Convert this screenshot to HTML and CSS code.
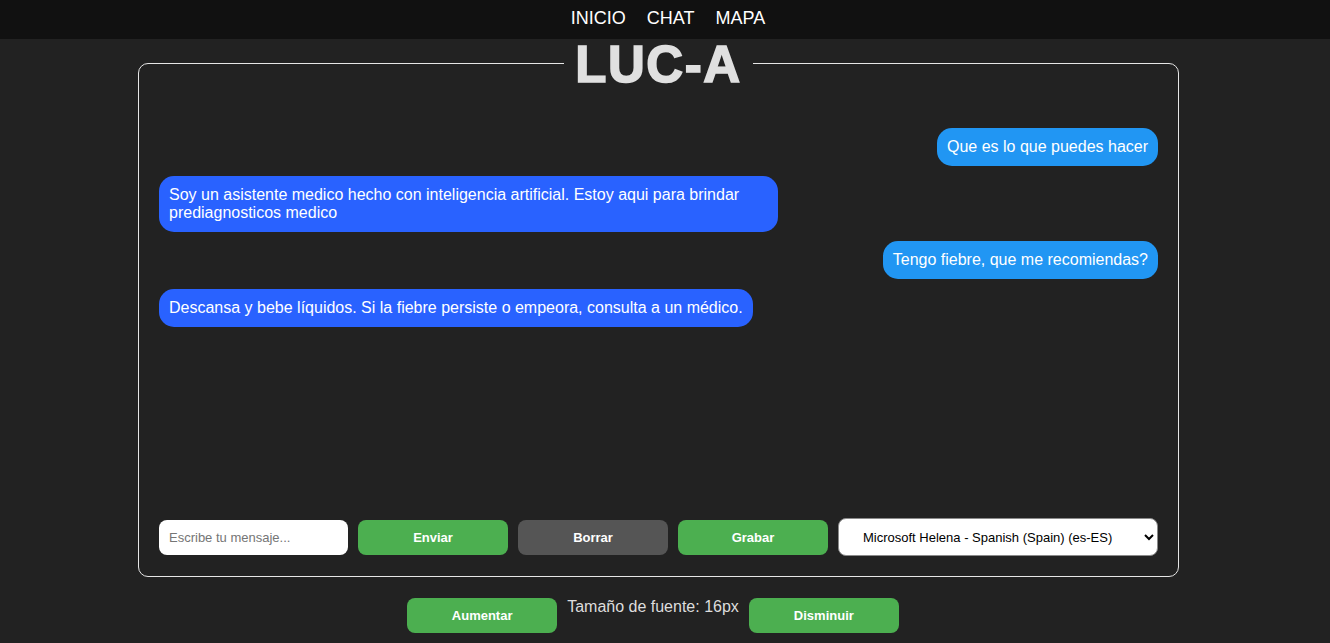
FILE: index.html
```html
<!DOCTYPE html>
<html lang="es">
<head>
<meta charset="utf-8">
<title>LUC-A</title>
<link rel="stylesheet" href="styles.css">
</head>
<body>
<nav class="topnav">
  <a href="#" class="topnav-link">INICIO</a>
  <a href="#" class="topnav-link">CHAT</a>
  <a href="#" class="topnav-link">MAPA</a>
</nav>
<main class="page">
  <fieldset class="chat-panel">
    <legend class="brand">LUC-A</legend>
    <div class="messages">
      <div class="msg msg-user">Que es lo que puedes hacer</div>
      <div class="msg msg-bot">Soy un asistente medico hecho con inteligencia artificial. Estoy aqui para brindar prediagnosticos medico</div>
      <div class="msg msg-user">Tengo fiebre, que me recomiendas?</div>
      <div class="msg msg-bot">Descansa y bebe líquidos. Si la fiebre persiste o empeora, consulta a un médico.</div>
    </div>
    <div class="composer">
      <input class="composer-input" type="text" placeholder="Escribe tu mensaje...">
      <button class="btn btn-green">Enviar</button>
      <button class="btn btn-grey">Borrar</button>
      <button class="btn btn-green">Grabar</button>
      <select class="voice-select">
        <option>Microsoft Helena - Spanish (Spain) (es-ES)</option>
      </select>
    </div>
  </fieldset>
  <div class="font-controls">
    <button class="btn btn-green">Aumentar</button>
    <span class="font-size-label">Tamaño de fuente: 16px</span>
    <button class="btn btn-green">Disminuir</button>
  </div>
</main>
</body>
</html>
```

FILE: styles.css
```css
html, body {
  margin: 0;
  padding: 0;
}
body {
  background: #222222;
  color: #dddddd;
  font-family: "Liberation Sans", Arial, sans-serif;
  height: 643px;
  overflow: hidden;
}
.topnav {
  background: #111111;
  height: 39px;
  box-sizing: border-box;
  display: flex;
  justify-content: center;
  align-items: flex-start;
  gap: 21px;
  padding: 8px 0 0 6px;
}
.topnav-link {
  color: #ffffff;
  text-decoration: none;
  font-size: 18px;
  line-height: 21px;
}
.page {
  padding: 0 8px;
}
.chat-panel {
  width: 1041px;
  box-sizing: border-box;
  margin: 0 0 0 130px;
  padding: 20px 20px 20px;
  border: 1px solid #e6e6e6;
  border-radius: 10px;
  min-inline-size: 0;
}
.brand {
  margin: 0 auto;
  padding: 4px 11px 0;
  font-size: 51px;
  line-height: 44px;
  font-weight: bold;
  letter-spacing: 1.6px;
  color: #e0e0e0;
  -webkit-text-stroke: 1.6px #e0e0e0;
}
.messages {
  height: 401px;
  box-sizing: border-box;
  padding-top: 21px;
  display: flex;
  flex-direction: column;
  gap: 10px;
}
.msg {
  max-width: 60%;
  padding: 10px;
  border-radius: 15px;
  font-size: 16px;
  line-height: 18px;
  color: #ffffff;
}
.msg-user {
  align-self: flex-end;
  background: #2196f3;
}
.msg-bot {
  align-self: flex-start;
  background: #2962ff;
  margin-bottom: -1px;
}
.composer {
  margin-top: 10px;
  display: flex;
  align-items: center;
  gap: 10px;
}
.composer-input {
  flex: 1;
  min-width: 0;
  height: 35px;
  box-sizing: border-box;
  border: none;
  border-radius: 8px;
  background: #ffffff;
  padding: 0 10px;
  font-family: "Liberation Sans", Arial, sans-serif;
  font-size: 13px;
  color: #222;
}
.composer-input::placeholder {
  color: #757575;
}
.btn {
  width: 150px;
  height: 35px;
  border: none;
  border-radius: 8px;
  color: #ffffff;
  font-family: "Liberation Sans", Arial, sans-serif;
  font-size: 13px;
  font-weight: bold;
  padding: 0;
  cursor: pointer;
}
.btn-green {
  background: #4caf50;
}
.btn-grey {
  background: #555555;
}
.voice-select {
  width: 320px;
  height: 38px;
  box-sizing: border-box;
  border: 1px solid #8a8a8a;
  border-radius: 8px;
  background: #ffffff;
  color: #000000;
  padding: 0 8px 0 20px;
  font-family: "Liberation Sans", Arial, sans-serif;
  font-size: 13px;
}
.font-controls {
  margin-top: 21px;
  display: flex;
  justify-content: center;
  align-items: flex-start;
  gap: 10px;
  padding-right: 24px;
}
.font-size-label {
  font-size: 16px;
  line-height: 18px;
  color: #dddddd;
}
```
